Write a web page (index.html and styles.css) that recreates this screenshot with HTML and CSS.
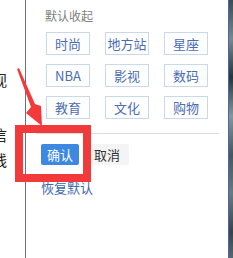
FILE: index.html
```html
<!DOCTYPE html>
<html lang="zh-CN">
<head>
    <meta charset="UTF-8">
    <title>频道设置</title>
    <link rel="stylesheet" href="styles.css">
</head>
<body>
    <div class="page">
        <aside class="side">
            <div class="side-text first">视</div>
            <div class="side-text second">信</div>
            <div class="side-text">线</div>
        </aside>

        <main class="panel">
            <div class="panel-title">默认收起</div>
            <div class="tags">
                <span class="tag">时尚</span>
                <span class="tag">地方站</span>
                <span class="tag">星座</span>
                <span class="tag">NBA</span>
                <span class="tag">影视</span>
                <span class="tag">数码</span>
                <span class="tag">教育</span>
                <span class="tag">文化</span>
                <span class="tag">购物</span>
            </div>
            <div class="divider"></div>
            <div class="actions">
                <button class="btn btn-primary">确认</button>
                <button class="btn btn-default">取消</button>
            </div>
            <a href="#" class="reset">恢复默认</a>
        </main>

        <div class="edge"></div>

        <!-- annotation overlay -->
        <div class="highlight"></div>
        <svg class="arrow" width="60" height="140" viewBox="0 0 60 140">
            <polygon points="17,69 19,68 35,104 41,106 42,126 26,113 31,107" fill="#f23a3a"/>
        </svg>
    </div>
</body>
</html>
```

FILE: styles.css
```css
* {
    margin: 0;
    padding: 0;
    box-sizing: border-box;
}

body {
    font-family: "Noto Sans CJK SC", "Noto Sans", sans-serif;
    background: #fff;
}

.page {
    position: relative;
    display: flex;
    width: 233px;
    height: 258px;
    overflow: hidden;
}

/* Left page behind the popup */
.side {
    width: 26px;
    flex-shrink: 0;
    overflow: hidden;
    border-right: 1px solid #6e6e7c;
}

.side-text {
    margin-left: -8px;
    font-size: 15px;
    line-height: 25px;
    color: #222;
}

.side-text.first {
    margin-top: 67px;
}

.side-text.second {
    margin-top: 30px;
}

/* Popup panel */
.panel {
    flex: 1;
    background: #fff;
}

.panel-title {
    margin: 7px 0 0 19px;
    font-size: 12px;
    line-height: 17px;
    color: #808080;
}

.tags {
    display: grid;
    grid-template-columns: repeat(3, 44px);
    column-gap: 15px;
    row-gap: 9px;
    margin: 8px 0 0 20px;
}

.tag {
    height: 23px;
    line-height: 21px;
    border: 1px solid #c9d9ec;
    text-align: center;
    font-size: 13px;
    color: #4a6db2;
}

.divider {
    height: 1px;
    margin: 14px 9px 0 10px;
    background: #dcdcdc;
}

.actions {
    display: flex;
    gap: 7px;
    margin: 10px 0 0 15px;
}

.btn {
    height: 21px;
    padding: 0 6px;
    border: none;
    border-radius: 2px;
    font-family: inherit;
    font-size: 13px;
    line-height: 21px;
}

.btn-primary {
    background: #3d88e0;
    color: #fff;
}

.btn-default {
    width: 43px;
    padding: 0 6px 0 8px;
    background: #f4f4f4;
    color: #333;
    text-align: left;
}

.reset {
    display: block;
    margin: 14px 0 0 15px;
    font-size: 13px;
    line-height: 17px;
    color: #3d68ad;
    text-decoration: none;
}

/* Right edge of the window behind */
.edge {
    width: 5px;
    flex-shrink: 0;
    border-left: 1px solid #3a6cc2;
    background: linear-gradient(#3e4a4c 0%, #7c8886 15%, #2c3436 30%, #8a9694 45%, #4a5658 60%, #6e7a78 75%, #3a4446 90%, #5c6866 100%);
}

/* Red annotation */
.highlight {
    position: absolute;
    left: 15px;
    top: 125px;
    width: 76px;
    height: 57px;
    border: 8px solid #f23a3a;
}

.arrow {
    position: absolute;
    left: 0;
    top: 0;
}
```
